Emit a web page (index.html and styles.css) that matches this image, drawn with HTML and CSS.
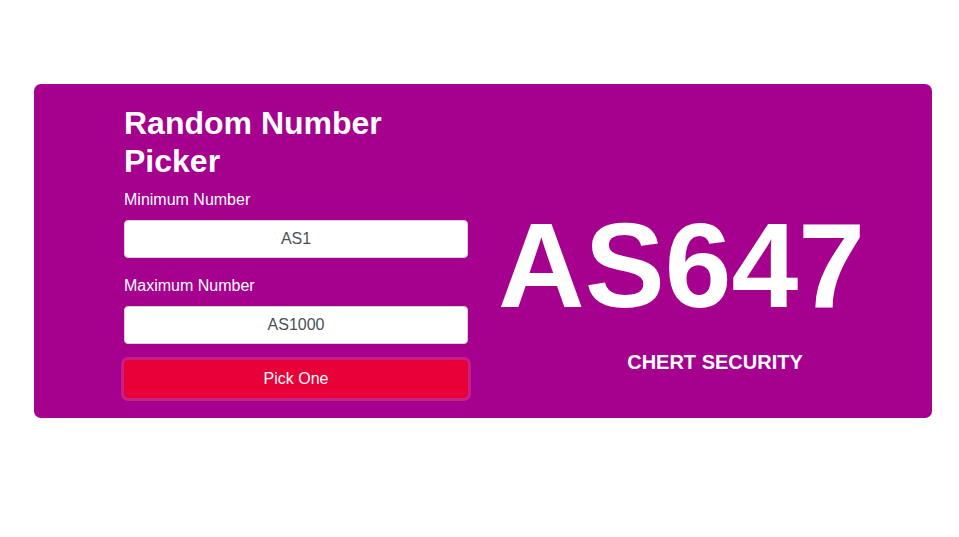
FILE: index.html
```html
<!DOCTYPE html>
<html lang="en">
<head>
<meta charset="utf-8">
<title>Random Number Picker</title>
<link rel="stylesheet" href="styles.css">
</head>
<body>
<div class="card">
  <div class="form-col">
    <h1 class="title">Random Number Picker</h1>
    <div class="field">
      <label class="label" for="min">Minimum Number</label>
      <input class="input" id="min" type="text" value="AS1">
    </div>
    <div class="field">
      <label class="label" for="max">Maximum Number</label>
      <input class="input" id="max" type="text" value="AS1000">
    </div>
    <button class="pick" type="button">Pick One</button>
  </div>
  <div class="result-col">
    <div class="result">AS647</div>
    <div class="brand">CHERT SECURITY</div>
  </div>
</div>
</body>
</html>
```

FILE: styles.css
```css
* { box-sizing: border-box; }
html, body { margin: 0; padding: 0; background: #fff; }
body {
  font-family: "Liberation Sans", Arial, sans-serif;
  color: #fff;
}
.card {
  margin: 84px 0 0 34px;
  width: 898px;
  background: #a6008f;
  border-radius: 7px;
  padding: 20px 0 20px 90px;
  display: flex;
}
.form-col {
  width: 344px;
  flex: none;
}
.title {
  margin: 0 0 8px;
  font-size: 32px;
  line-height: 38px;
  font-weight: bold;
}
.field { margin-bottom: 16px; }
.label {
  display: block;
  font-size: 16px;
  line-height: 24px;
  margin-bottom: 8px;
}
.input {
  display: block;
  width: 100%;
  height: 38px;
  border: 1px solid #ced4da;
  border-radius: 4px;
  background: #fff;
  color: #495057;
  font-family: inherit;
  font-size: 16px;
  text-align: center;
  padding: 6px 12px;
}
.pick {
  display: block;
  width: 100%;
  height: 38px;
  margin-top: 16px;
  border: 1px solid #ea0039;
  border-radius: 4px;
  background: #ea0039;
  color: #fff;
  font-family: inherit;
  font-size: 16px;
  box-shadow: 0 0 0 3px rgba(236, 60, 120, 0.5);
}
.result-col {
  width: 462px;
  flex: none;
  margin-left: 16px;
  padding-top: 101px;
}
.result {
  padding-left: 14px;
  font-size: 120px;
  line-height: 120px;
  font-weight: bold;
  white-space: nowrap;
}
.brand {
  margin-top: 25px;
  text-align: center;
  font-size: 20px;
  line-height: 24px;
  font-weight: bold;
}
```
